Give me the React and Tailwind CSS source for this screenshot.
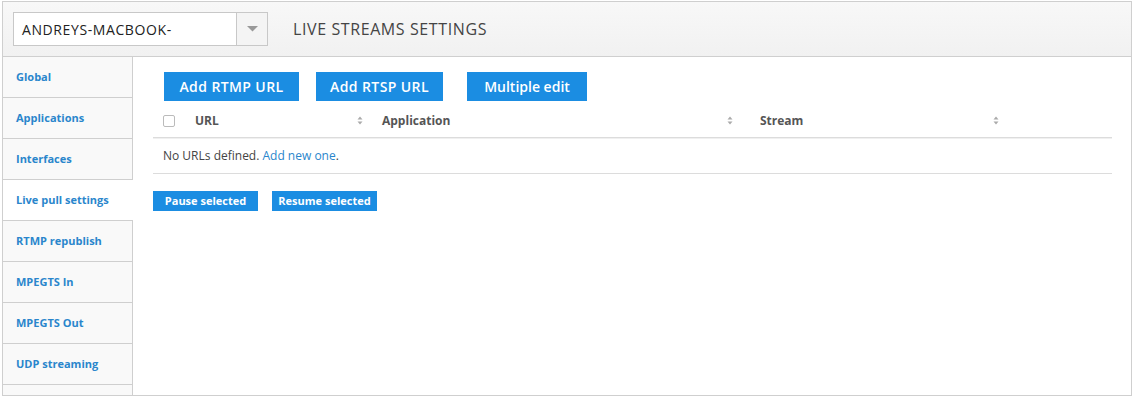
import React from 'react';

const menu = [
  'Global',
  'Applications',
  'Interfaces',
  'Live pull settings',
  'RTMP republish',
  'MPEGTS In',
  'MPEGTS Out',
  'UDP streaming',
];

const SortIcon = () => (
  <svg width="6" height="9" viewBox="0 0 6 9" className="shrink-0">
    <path d="M3 0.5 L5.5 3.5 H0.5 Z" fill="#aaa" />
    <path d="M3 8.5 L5.5 5.5 H0.5 Z" fill="#aaa" />
  </svg>
);

const App = () => {
  const active = 'Live pull settings';

  return (
    <div
      className="w-[1134px] h-[397px] bg-white overflow-hidden"
      style={{ fontFamily: '"Open Sans", "Noto Sans", sans-serif' }}
    >
      <div className="ml-[2px] mt-[1px] w-[1130px] h-[395px] border border-[#cfcfcf] flex flex-col">
        {/* Header */}
        <div className="h-[55px] shrink-0 flex items-center border-b border-[#cfcfcf] bg-gradient-to-b from-[#f8f8f8] to-[#f1f1f1] pl-[10px]">
          <div className="w-[255px] h-[34px] flex bg-white border border-[#c8c8c8]">
            <div className="flex-1 flex items-center pl-[8px] text-[14px] text-[#222] tracking-[0.6px]">
              ANDREYS-MACBOOK-
            </div>
            <div className="w-[31px] border-l border-[#c8c8c8] bg-[#f4f4f4] flex items-center justify-center">
              <svg width="11" height="6" viewBox="0 0 11 6">
                <path d="M0 0 H11 L5.5 5.5 Z" fill="#999" />
              </svg>
            </div>
          </div>
          <div className="ml-[25px] text-[16px] text-[#444] tracking-[0.6px]">
            LIVE STREAMS SETTINGS
          </div>
        </div>

        <div className="flex flex-1 min-h-0">
          {/* Sidebar */}
          <div className="w-[130px] shrink-0 flex flex-col">
            {menu.map((item) => (
              <div
                key={item}
                className={`h-[41px] shrink-0 flex items-center pl-[13px] text-[11px] font-bold text-[#2a86cc] border-b border-[#cfcfcf] ${
                  item === active
                    ? 'bg-white'
                    : 'bg-[#f9f9f9] border-r'
                }`}
              >
                {item}
              </div>
            ))}
            <div className="flex-1 bg-[#f9f9f9] border-r border-[#cfcfcf]" />
          </div>

          {/* Content */}
          <div className="flex-1 pl-[20px] pr-[18px] pt-[15px]">
            <div className="flex gap-[17px] pl-[11px]">
              <button className="h-[29px] w-[135px] bg-[#1b8de2] text-white text-[14px] font-semibold tracking-[0.4px]">
                Add RTMP URL
              </button>
              <button className="h-[29px] w-[127px] bg-[#1b8de2] text-white text-[14px] font-semibold tracking-[0.4px]">
                Add RTSP URL
              </button>
              <button className="h-[29px] w-[120px] ml-[7px] bg-[#1b8de2] text-white text-[14px] font-semibold">
                Multiple edit
              </button>
            </div>

            <div className="mt-[4px] w-[959px]">
              <div className="h-[33px] flex items-center border-b border-[#dcdcdc] text-[12px] font-bold text-[#555] pb-[1px]">
                <div className="w-[12px] h-[12px] ml-[10px] border border-[#bbb] rounded-[2px] bg-white" />
                <div className="flex items-center w-[171px] ml-[20px] pr-[3px] justify-between">
                  <span>URL</span>
                  <SortIcon />
                </div>
                <div className="flex items-center w-[351px] ml-[16px] justify-between">
                  <span>Application</span>
                  <SortIcon />
                </div>
                <div className="flex items-center w-[239px] ml-[27px] justify-between">
                  <span>Stream</span>
                  <SortIcon />
                </div>
              </div>
              <div className="h-[36px] flex items-center border-t border-[#f0f0f0] border-b border-b-[#dcdcdc] pl-[10px] text-[12px] text-[#444]">
                No URLs defined.&nbsp;<span className="text-[#2a86cc]">Add new one</span>.
              </div>
            </div>

            <div className="mt-[17px] flex gap-[14px]">
              <button className="h-[20px] w-[105px] bg-[#1b8de2] text-white text-[11px] font-bold">
                Pause selected
              </button>
              <button className="h-[20px] w-[105px] bg-[#1b8de2] text-white text-[11px] font-bold">
                Resume selected
              </button>
            </div>
          </div>
        </div>
      </div>
    </div>
  );
};

export default App;
